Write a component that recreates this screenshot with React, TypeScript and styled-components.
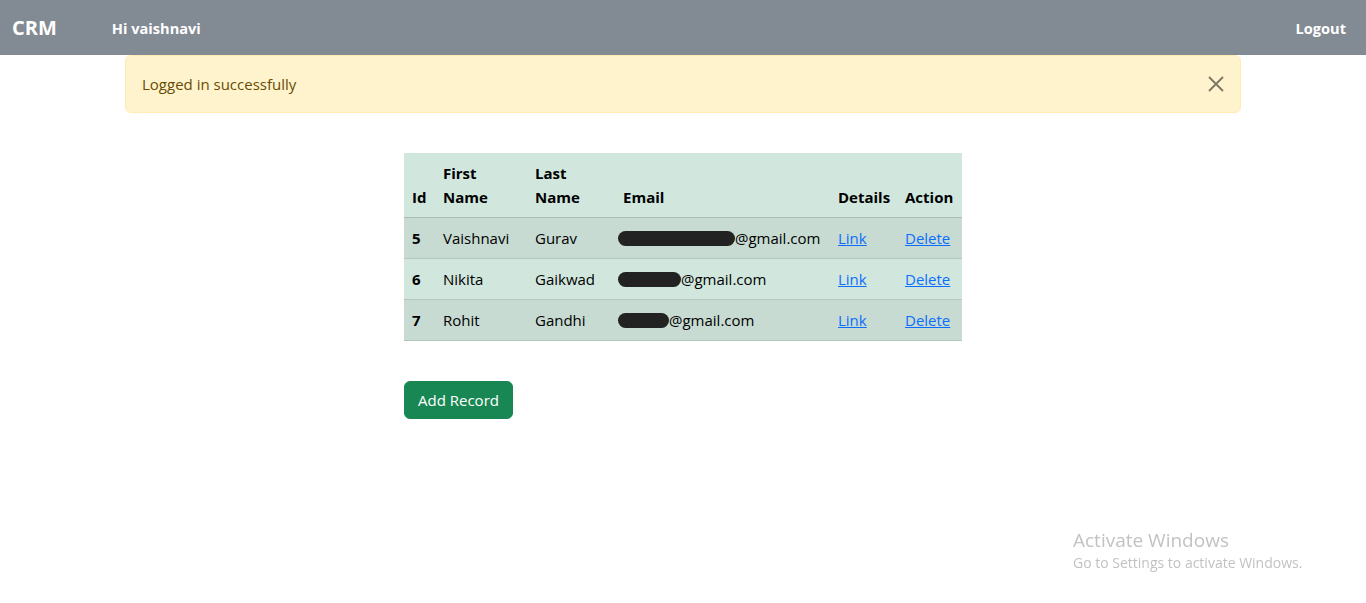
import React from "react";
import styled, { createGlobalStyle } from "styled-components";

const Global = createGlobalStyle`
  html, body { margin: 0; padding: 0; background: #fff; }
  body {
    font-family: "Open Sans", "Noto Sans", "Liberation Sans", sans-serif;
    font-size: 15px;
    line-height: 24px;
    color: #212529;
  }
  * { box-sizing: border-box; }
`;

const Nav = styled.nav`
  height: 55px;
  background: #828a94;
  display: flex;
  align-items: center;
  padding: 0 20px 0 12px;
  color: #fff;
`;

const Brand = styled.a`
  font-size: 20px;
  font-weight: 700;
  color: #fff;
  text-decoration: none;
  margin-right: 55px;
`;

const NavText = styled.span`
  font-weight: 700;
  font-size: 14.6px;
`;

const Spacer = styled.div`
  flex: 1;
`;

const Container = styled.div`
  width: 1140px;
  margin: 0 auto;
  padding: 0 12px;
`;

const Alert = styled.div`
  display: flex;
  align-items: center;
  justify-content: space-between;
  height: 58px;
  padding: 0 16px;
  background: #fff3cd;
  border: 1px solid #ffecb5;
  border-radius: 6px;
  color: #664d03;
`;

const CloseBtn = styled.button`
  border: 0;
  background: transparent;
  padding: 0;
  width: 16px;
  height: 16px;
  display: flex;
  align-items: center;
  justify-content: center;
  cursor: pointer;
`;

const Content = styled.div`
  width: 558px;
  margin: 40px auto 0;
`;

const Table = styled.table`
  width: 558px;
  border-collapse: collapse;
  table-layout: fixed;
  background: #d1e7dd;
  color: #000;
  margin-bottom: 40px;
`;

const Th = styled.th<{ $w: number }>`
  width: ${(p) => p.$w}px;
  text-align: left;
  vertical-align: bottom;
  padding: 8px;
  font-weight: 700;
  border-bottom: 1px solid #a9bdb3;
  white-space: normal;
`;

const Tr = styled.tr<{ $striped?: boolean }>`
  background: ${(p) => (p.$striped ? "#c7dbd2" : "#d1e7dd")};
`;

const Td = styled.td<{ $bold?: boolean }>`
  padding: 8px;
  height: 41px;
  font-weight: ${(p) => (p.$bold ? 700 : 400)};
  border-bottom: 1px solid #b4c7bd;
  white-space: nowrap;
`;

const Blob = styled.span<{ $w: number }>`
  display: inline-block;
  width: ${(p) => p.$w}px;
  height: 15px;
  margin-left: -5px;
  background: #222;
  border-radius: 8px;
  vertical-align: -2px;
`;

const Link = styled.a`
  color: #0d6efd;
  text-decoration: underline;
`;

const Button = styled.button`
  background: #198754;
  color: #fff;
  border: 1px solid #198754;
  border-radius: 6px;
  height: 38px;
  padding: 0 13px;
  font-family: inherit;
  font-size: 15px;
  cursor: pointer;
`;

const Watermark = styled.div`
  position: fixed;
  left: 1073px;
  top: 527px;
  color: #c2c2c2;
  font-family: "Open Sans", "Noto Sans", sans-serif;
  pointer-events: none;
`;

const WmTitle = styled.div`
  font-size: 19px;
  line-height: 26px;
`;

const WmSub = styled.div`
  font-size: 14px;
  line-height: 20px;
`;

const rows = [
  { id: 5, first: "Vaishnavi", last: "Gurav", blob: 117, striped: true },
  { id: 6, first: "Nikita", last: "Gaikwad", blob: 63, striped: false },
  { id: 7, first: "Rohit", last: "Gandhi", blob: 51, striped: true },
];

export default function App() {
  return (
    <>
      <Global />
      <Nav>
        <Brand href="#">CRM</Brand>
        <NavText>Hi vaishnavi</NavText>
        <Spacer />
        <NavText>Logout</NavText>
      </Nav>
      <Container>
        <Alert>
          <span>Logged in successfully</span>
          <CloseBtn aria-label="Close">
            <svg width="16" height="16" viewBox="0 0 16 16">
              <path d="M1 1 L15 15 M15 1 L1 15" stroke="#7b7565" strokeWidth="1.8" />
            </svg>
          </CloseBtn>
        </Alert>
      </Container>
      <Content>
        <Table>
          <thead>
            <tr>
              <Th $w={31}>Id</Th>
              <Th $w={92}>First Name</Th>
              <Th $w={88}>Last Name</Th>
              <Th $w={215}>Email</Th>
              <Th $w={67}>Details</Th>
              <Th $w={65}>Action</Th>
            </tr>
          </thead>
          <tbody>
            {rows.map((r) => (
              <Tr key={r.id} $striped={r.striped}>
                <Td $bold>{r.id}</Td>
                <Td>{r.first}</Td>
                <Td>{r.last}</Td>
                <Td>
                  <Blob $w={r.blob} />@gmail.com
                </Td>
                <Td>
                  <Link href="#">Link</Link>
                </Td>
                <Td>
                  <Link href="#">Delete</Link>
                </Td>
              </Tr>
            ))}
          </tbody>
        </Table>
        <Button>Add Record</Button>
      </Content>
      <Watermark>
        <WmTitle>Activate Windows</WmTitle>
        <WmSub>Go to Settings to activate Windows.</WmSub>
      </Watermark>
    </>
  );
}
